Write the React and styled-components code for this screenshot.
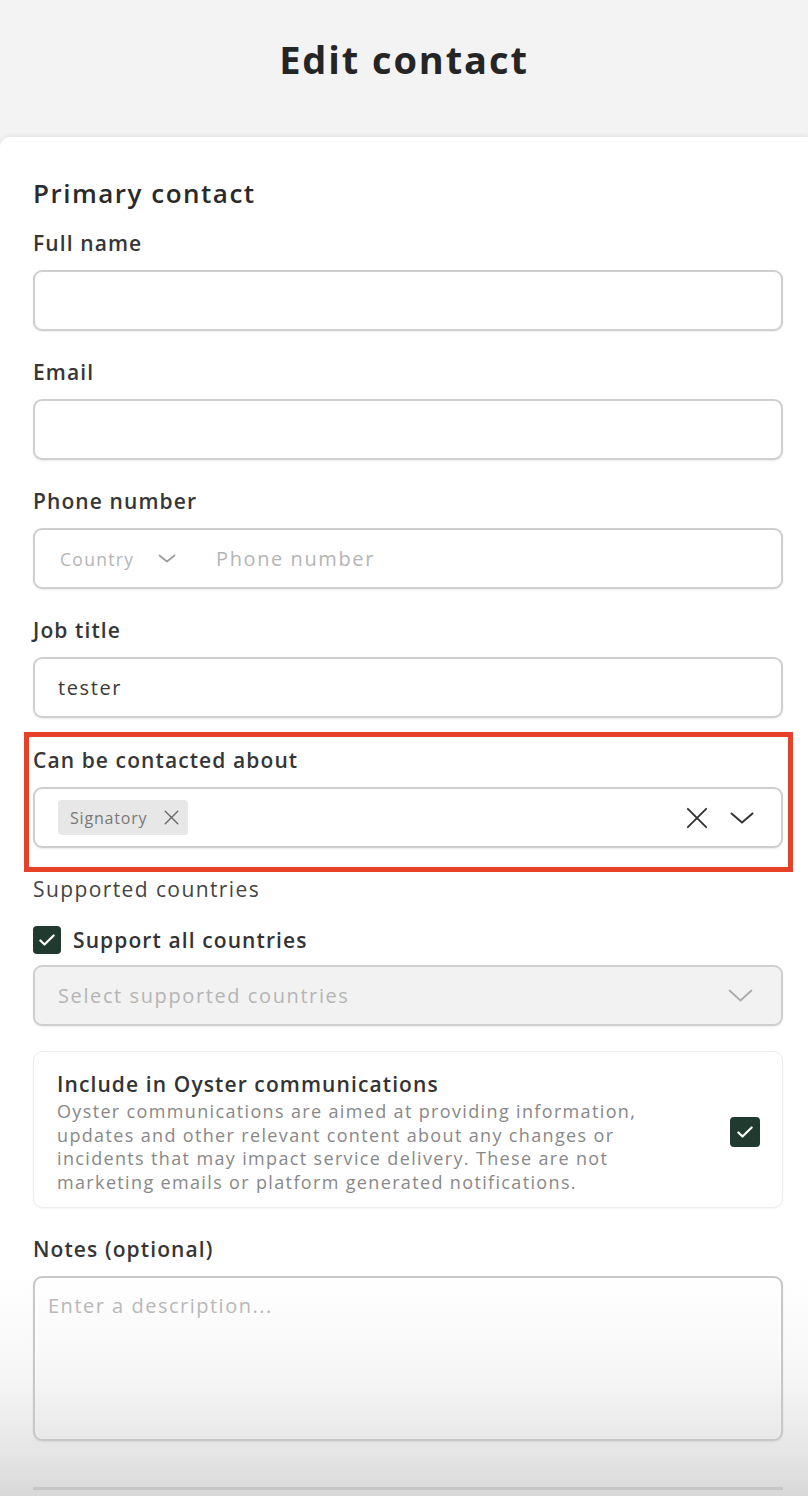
import React from 'react'
import styled, { createGlobalStyle } from 'styled-components'

const GlobalStyle = createGlobalStyle`
  html, body {
    margin: 0;
    padding: 0;
    background: #f3f3f3;
    font-family: "Open Sans", "Noto Sans", sans-serif;
    color: #2a2a2a;
  }
  * { box-sizing: border-box; }
`

const Page = styled.div`
  width: 808px;
  height: 1496px;
  overflow: hidden;
  display: flex;
  flex-direction: column;
  background: #f3f3f3;
`

const Header = styled.header`
  height: 137px;
  flex-shrink: 0;
  display: flex;
  align-items: flex-start;
  justify-content: center;
  padding-top: 33px;
`

const Title = styled.h1`
  margin: 0;
  font-size: 38px;
  font-weight: 700;
  letter-spacing: 1.9px;
  color: #252525;
  line-height: 52px;
`

const Card = styled.main`
  flex: 1;
  background: linear-gradient(
    to bottom,
    #ffffff 0,
    #ffffff 1140px,
    #f6f6f6 1240px,
    #e4e4e4 1320px,
    #d8d8d8 100%
  );
  border-top-left-radius: 10px;
  box-shadow: 0 -2px 4px rgba(0, 0, 0, 0.06);
  padding: 38px 25px 0 33px;
  display: flex;
  flex-direction: column;
`

const Section = styled.h2`
  margin: 0 0 19px;
  font-size: 26px;
  font-weight: 600;
  letter-spacing: 1.5px;
  line-height: 36px;
  color: #2a2a2a;
`

const Label = styled.label`
  display: block;
  font-size: 21px;
  font-weight: ${p => p.$weight ?? 600};
  letter-spacing: ${p => (p.$weight === 500 ? 1.4 : 1.1)}px;
  line-height: 26px;
  color: ${p => (p.$weight === 500 ? '#444' : '#363636')};
  margin-bottom: ${p => p.$gap ?? 14}px;
`

const Field = styled.div`
  margin-bottom: ${p => p.$gap ?? 28}px;
`

const Box = styled.div`
  height: 61px;
  border: 2px solid #cfcfcf;
  border-radius: 9px;
  background: ${p => (p.$disabled ? '#f2f2f2' : '#fff')};
  box-shadow: 0 1px 2px rgba(0, 0, 0, 0.08);
  display: flex;
  align-items: center;
  padding: 0 ${p => p.$right ?? 24}px 0 ${p => p.$left ?? 23}px;
  gap: 12px;
  font-size: 20px;
  letter-spacing: 1.6px;
  color: #3a3a3a;
`

const Placeholder = styled.span`
  color: #b5b5b5;
  font-size: ${p => p.$size ?? 20}px;
  letter-spacing: ${p => p.$ls ?? 1.6}px;
  flex: ${p => (p.$grow ? 1 : 'none')};
`

const CountryPart = styled.div`
  display: flex;
  align-items: center;
  gap: 24px;
  width: 144px;
  color: #b8b8b8;
`

const Highlight = styled.div`
  margin: 0 -10px 4px -9px;
  border: 5px solid #e8412a;
  padding: 10px 5px 19px 4px;
`

const Chip = styled.span`
  display: inline-flex;
  align-items: center;
  gap: 17px;
  height: 35px;
  padding: 0 9px 0 12px;
  border-radius: 4px;
  background: #e7e7e7;
  font-size: 16px;
  letter-spacing: 0.8px;
  color: #777;
`

const Spacer = styled.div`
  flex: 1;
`

const IconGroup = styled.div`
  display: flex;
  align-items: center;
  gap: 22px;
  color: #333;
`

const CheckRow = styled.div`
  display: flex;
  align-items: center;
  gap: 12px;
  margin: 24px 0 11px;
  font-size: 21px;
  font-weight: 600;
  letter-spacing: 1.1px;
  color: #333;
`

const Check = styled.span`
  width: ${p => p.$size}px;
  height: ${p => p.$size}px;
  border-radius: 4px;
  background: #213a30;
  display: inline-flex;
  align-items: center;
  justify-content: center;
  flex-shrink: 0;
`

const CommsCard = styled.div`
  margin: 25px 0 28px;
  border: 1px solid #ececec;
  border-radius: 10px;
  padding: 18px 22px 13px 23px;
  display: flex;
  align-items: center;
  gap: 36px;
  box-shadow: 0 1px 2px rgba(0, 0, 0, 0.04);
`

const CommsText = styled.div`
  flex: 1;
`

const CommsTitle = styled.div`
  font-size: 21px;
  font-weight: 600;
  letter-spacing: 1.1px;
  color: #333;
  line-height: 28px;
  margin-bottom: 2px;
`

const CommsBody = styled.p`
  margin: 0;
  font-size: 18px;
  letter-spacing: 1.35px;
  line-height: 23.5px;
  color: #888;
`

const TextArea = styled.div`
  height: 165px;
  border: 2px solid #c8c8c8;
  border-radius: 9px;
  padding: 14px 13px;
  font-size: 20px;
  letter-spacing: 1.5px;
  color: #b8b8b8;
  background: transparent;
  box-shadow: 0 1px 2px rgba(0, 0, 0, 0.08);
`

const Rule = styled.hr`
  margin: 46px 0 0;
  border: none;
  height: 3px;
  background: #c6c6c6;
`

const Chevron = ({ w = 24, h = 12, color = '#333', sw = 1.8 }) => (
  <svg width={w} height={h} viewBox={`0 0 ${w} ${h}`} fill="none" stroke={color} strokeWidth={sw} strokeLinecap="round" strokeLinejoin="round">
    <path d={`M1.5 1.5L${w / 2} ${h - 1.5}L${w - 1.5} 1.5`} />
  </svg>
)

const Cross = ({ size = 24, color = '#333', w = 1.8 }) => (
  <svg width={size} height={size} viewBox="0 0 24 24" fill="none" stroke={color} strokeWidth={w} strokeLinecap="round">
    <path d="M2 2l20 20M22 2L2 22" />
  </svg>
)

const Tick = ({ size = 18 }) => (
  <svg width={size} height={size} viewBox="0 0 24 24" fill="none" stroke="#fff" strokeWidth="2.6" strokeLinecap="round" strokeLinejoin="round">
    <path d="M4 12.5l5 5L20 6.5" />
  </svg>
)

export default function App() {
  return (
    <>
      <GlobalStyle />
      <Page>
        <Header>
          <Title>Edit contact</Title>
        </Header>
        <Card>
          <Section>Primary contact</Section>

          <Field>
            <Label>Full name</Label>
            <Box />
          </Field>

          <Field>
            <Label>Email</Label>
            <Box />
          </Field>

          <Field>
            <Label>Phone number</Label>
            <Box $left={25}>
              <CountryPart>
                <Placeholder $size={17.5} $ls={1.3}>Country</Placeholder>
                <Chevron w={18} h={9} color="#9a9a9a" sw={1.7} />
              </CountryPart>
              <Placeholder>Phone number</Placeholder>
            </Box>
          </Field>

          <Field $gap={14}>
            <Label>Job title</Label>
            <Box>tester</Box>
          </Field>

          <Highlight>
            <Label>Can be contacted about</Label>
            <Box $right={27}>
              <Chip>
                Signatory
                <Cross size={15} color="#666" w={2.2} />
              </Chip>
              <Spacer />
              <IconGroup>
                <Cross size={22} color="#333" w={2} />
                <Chevron w={24} h={12} color="#333" sw={2} />
              </IconGroup>
            </Box>
          </Highlight>

          <Label as="div" $gap={0} $weight={500}>Supported countries</Label>
          <CheckRow>
            <Check $size={28}><Tick size={20} /></Check>
            Support all countries
          </CheckRow>
          <Box $disabled $right={28}>
            <Placeholder $grow>Select supported countries</Placeholder>
            <Chevron w={25} h={13} color="#aaa" sw={1.7} />
          </Box>

          <CommsCard>
            <CommsText>
              <CommsTitle>Include in Oyster communications</CommsTitle>
              <CommsBody>
                Oyster communications are aimed at providing information,
                updates and other relevant content about any changes or
                incidents that may impact service delivery. These are not
                marketing emails or platform generated notifications.
              </CommsBody>
            </CommsText>
            <Check $size={30}><Tick size={20} /></Check>
          </CommsCard>

          <Label>Notes (optional)</Label>
          <TextArea>Enter a description...</TextArea>
          <Rule />
        </Card>
      </Page>
    </>
  )
}
